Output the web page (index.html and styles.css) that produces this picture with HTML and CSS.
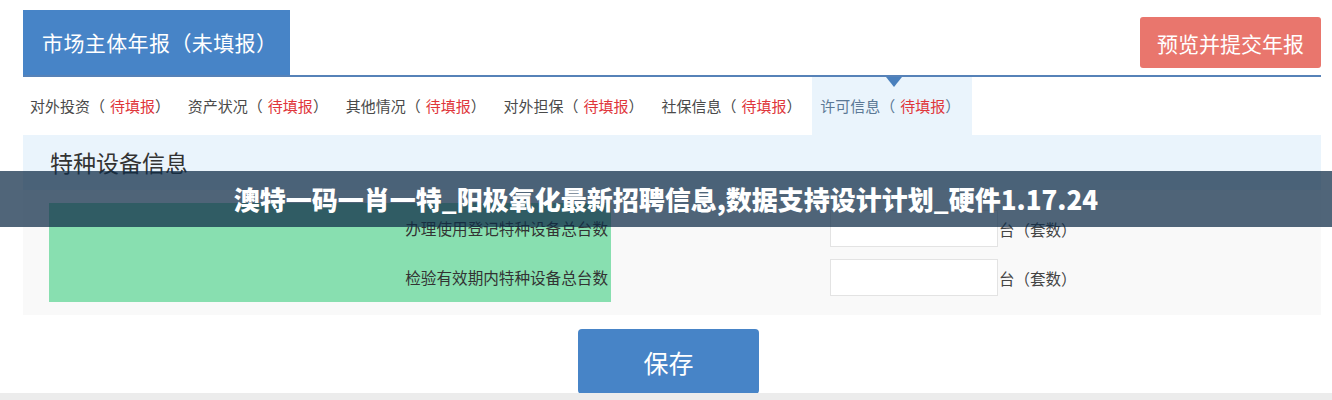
FILE: index.html
```html
<!DOCTYPE html>
<html lang="zh-CN">
<head>
<meta charset="utf-8">
<title>市场主体年报</title>
<link rel="stylesheet" href="styles.css">
</head>
<body>
<div class="page">
  <div class="topbar">
    <div class="title-tab">市场主体年报（未填报）</div>
    <button class="btn-submit">预览并提交年报</button>
  </div>
  <div class="tabs">
    <div class="tab">对外投资（<span class="pending">待填报</span>）</div>
    <div class="tab">资产状况（<span class="pending">待填报</span>）</div>
    <div class="tab">其他情况（<span class="pending">待填报</span>）</div>
    <div class="tab">对外担保（<span class="pending">待填报</span>）</div>
    <div class="tab">社保信息（<span class="pending">待填报</span>）</div>
    <div class="tab active">许可信息（<span class="pending">待填报</span>）</div>
  </div>
  <div class="panel">
    <div class="panel-head">特种设备信息</div>
    <div class="panel-body">
      <div class="labels">
        <div class="label">办理使用登记特种设备总台数</div>
        <div class="label">检验有效期内特种设备总台数</div>
      </div>
      <div class="fields">
        <div class="field"><input class="input" type="text"><span class="unit">台（套数）</span></div>
        <div class="field"><input class="input" type="text"><span class="unit">台（套数）</span></div>
      </div>
    </div>
  </div>
  <div class="actions">
    <button class="btn-save">保存</button>
  </div>
</div>
<div class="bottom-strip"></div>
<div class="banner">澳特一码一肖一特_阳极氧化最新招聘信息,数据支持设计计划_硬件1.17.24</div>
</body>
</html>
```

FILE: styles.css
```css
* { box-sizing: border-box; }
html, body {
  margin: 0;
  padding: 0;
  background: #ffffff;
  font-family: "Noto Sans CJK SC", "Noto Sans", sans-serif;
  color: #333;
}
body { position: relative; height: 400px; overflow: hidden; }

.page {
  margin-left: 23px;
  width: 1298px;
}

.topbar {
  height: 77px;
  padding-top: 10px;
  border-bottom: 2px solid #5682b8;
  display: flex;
  justify-content: space-between;
  align-items: flex-start;
}
.title-tab {
  width: 267px;
  height: 65px;
  background: #4784c7;
  color: #fff;
  font-size: 21px;
  letter-spacing: 0.4px;
  line-height: 65px;
  padding-left: 19px;
  white-space: nowrap;
}
.btn-submit {
  margin-top: 7px;
  width: 181px;
  height: 51px;
  border: none;
  border-radius: 3px;
  background: #e9766d;
  color: #fff;
  font-family: inherit;
  font-size: 21px;
  padding: 0;
}

.tabs {
  display: flex;
  height: 58px;
}
.tab {
  position: relative;
  padding: 0 10.8px 0 7px;
  font-size: 15px;
  line-height: 58px;
  color: #4a4a4a;
  white-space: nowrap;
}
.tab .pending { color: #e0363b; margin-left: 5px; }
.tab.active {
  background: #eaf4fc;
  color: #5b7895;
  padding-left: 8px;
  padding-right: 12px;
}
.tab.active::before {
  content: "";
  position: absolute;
  top: 0;
  left: 74px;
  border-left: 8px solid transparent;
  border-right: 8px solid transparent;
  border-top: 10px solid #4a80bd;
}

.panel { background: #f9f9f9; }
.panel-head {
  height: 55px;
  background: #eaf4fc;
  font-size: 23px;
  line-height: 55px;
  padding-left: 27px;
  color: #333;
}
.panel-body {
  display: flex;
  padding: 13px 0 13px 26px;
}
.labels {
  width: 562px;
  background: #88dfb0;
  padding: 7px 3px 6px 0;
  display: flex;
  flex-direction: column;
  gap: 12px;
}
.label {
  height: 37px;
  line-height: 37px;
  text-align: right;
  font-size: 15.6px;
  color: #333;
}
.fields {
  margin-left: 219px;
  padding-top: 7px;
  display: flex;
  flex-direction: column;
  gap: 12px;
}
.field {
  display: flex;
  align-items: center;
  height: 37px;
}
.input {
  width: 168px;
  height: 37px;
  border: 1px solid #e3e3e3;
  background: #fff;
  margin: 0;
  padding: 0 6px;
}
.unit {
  margin-left: 1px;
  font-size: 15.5px;
  color: #444;
}

.actions {
  display: flex;
  justify-content: center;
  padding-top: 14px;
  padding-right: 7px;
}
.btn-save {
  width: 181px;
  height: 65px;
  border: none;
  border-radius: 4px;
  background: #4784c7;
  color: #fff;
  font-family: inherit;
  font-size: 25px;
  padding: 0;
}

.bottom-strip {
  position: absolute;
  left: 0;
  right: 0;
  top: 393px;
  height: 7px;
  background: #ececec;
}

.banner {
  position: absolute;
  left: 0;
  right: 0;
  top: 171px;
  height: 56px;
  background: rgba(15, 44, 71, 0.73);
  color: #fff;
  font-size: 26px;
  font-weight: 900;
  line-height: 56px;
  text-align: center;
  white-space: nowrap;
}
```
